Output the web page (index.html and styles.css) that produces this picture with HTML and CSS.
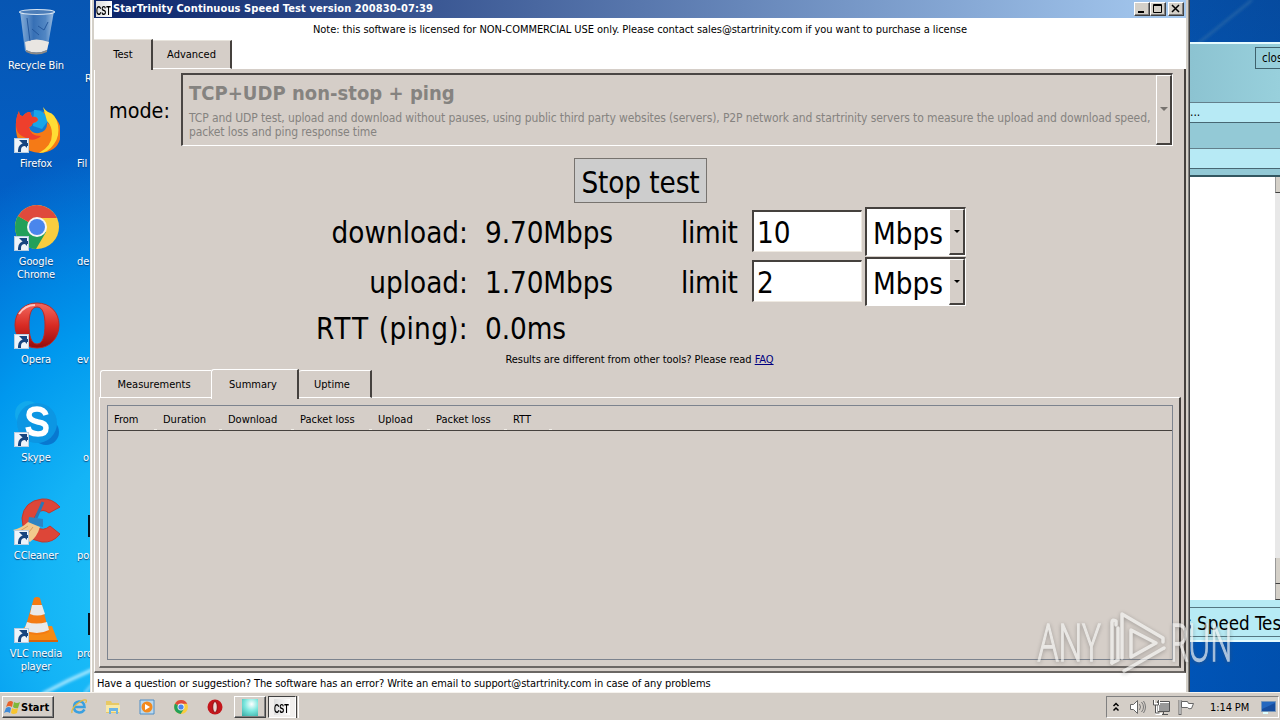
FILE: index.html
```html
<!doctype html>
<html lang="en">
<head>
    <meta charset="UTF-8">
    <title>StarTrinity Continuous Speed Test</title>
    <link rel="stylesheet" href="styles.css">
</head>
<body>
<div class="desktop">
    <svg class="wallpaper" width="1280" height="693">
        <defs>
            <filter id="soft"><feGaussianBlur stdDeviation="1.5"/></filter>
        </defs>
        <path d="M1190 50L1252 0" stroke="#2a69a8" stroke-width="2" filter="url(#soft)"/>
        <path d="M42 694Q68 680 94 669" stroke="#aeeaff" stroke-width="3" fill="none" filter="url(#soft)"/>
        <path d="M84 694L94 682" stroke="#8fdcff" stroke-width="2" fill="none" filter="url(#soft)"/>
    </svg>

    <div class="icons">
        <div class="icon">
            <svg width="48" height="50" viewBox="0 0 48 50">
                <defs><linearGradient id="bin"><stop offset="0" stop-color="#9fbfe0"/><stop offset=".4" stop-color="#3f74b5"/><stop offset=".75" stop-color="#5f8fc6"/><stop offset="1" stop-color="#b7d0ea"/></linearGradient></defs>
                <path d="M8 3L13 43Q24 48 35 43L42 3Z" fill="url(#bin)" opacity=".85"/>
                <path d="M13 34Q24 29 37 34L35 42Q24 47 14 42Z" fill="#e9e6e2"/>
                <path d="M14 42Q24 47 35 42L35 44Q24 49 14 44Z" fill="#8d8a86"/>
                <ellipse cx="25" cy="4" rx="17.500" ry="2.500" fill="#4c7db8" stroke="#d7e5f3" stroke-width="1.200"/>
                <path d="M15 10L18 33M26 18l6 4 4-8M20 21l7 6" stroke="#24579c" fill="none"/>
            </svg>
            <span>Recycle Bin</span>
        </div>
        <div class="icon">
            <svg width="48" height="50" viewBox="0 0 48 50">
                <circle cx="27" cy="21" r="17" fill="#1578d2"/>
                <path d="M22 4q11-1 14 11l-6 8-9-3z" fill="#19a5e8"/>
                <path d="M7 5q0 5 4 5 3-4 7-4l2 5q5-1 6 3-2 3-5 3-1 3-4 4 2 7 10 6 9-2 8-11 3 2 2 5 1-8-6-15 6 0 9 3 9 7 9 18-1 19-21 20Q6 45 4 25q-1-11 3-20z" fill="#f57a16"/>
                <path d="M7 5q0 5 4 5 3-4 7-4l2 5q5-1 6 3-2 3-5 3-1 3-4 4 1 9 12 9-8 7-17 1Q1 27 5 10z" fill="#ee3f2c"/>
                <path d="M31 1q2 3 5 5 8 2 10 13 2 11-4 19-6 9-15 9 13-7 13-19 0-8-5-13-2-7-4-14z" fill="#ffdc35"/>
            </svg>
            <i class="arrow"></i>
            <span>Firefox</span>
        </div>
        <div class="icon">
            <svg width="48" height="50" viewBox="0 0 48 50">
                <circle cx="25" cy="23" r="22" fill="#f9cd3f"/>
                <path d="M25 23L6 12A22 22 0 0 0 24 45L34 28Z" fill="#22a05a"/>
                <path d="M25 23L6 12A22 22 0 0 1 45 14H25Z" fill="#df4a3c"/>
                <circle cx="25" cy="23" r="10" fill="#f5f5f5"/>
                <circle cx="25" cy="23" r="8" fill="#4a86ec"/>
            </svg>
            <i class="arrow"></i>
            <span>Google<br>Chrome</span>
        </div>
        <div class="icon">
            <svg width="48" height="50" viewBox="0 0 48 50">
                <defs><linearGradient id="opera" x2="0" y2="1"><stop offset="0" stop-color="#f36a60"/><stop offset=".5" stop-color="#d82b23"/><stop offset="1" stop-color="#930c0d"/></linearGradient></defs>
                <path fill-rule="evenodd" d="M25 1C38 1 47 10 47 23S38 46 25 46 3 36 3 23 12 1 25 1ZM25 5C19 5 17 13 17 23S19 42 25 42s8-9 8-19S31 5 25 5Z" fill="url(#opera)" stroke="#b92b27"/>
                <path d="M7 12Q13 3 23 3" stroke="#ffc4bf" stroke-width="2" fill="none"/>
            </svg>
            <i class="arrow"></i>
            <span>Opera</span>
        </div>
        <div class="icon">
            <svg width="48" height="50" viewBox="0 0 48 50">
                <circle cx="16" cy="14" r="13" fill="#12a9ec"/>
                <circle cx="34" cy="32" r="13" fill="#0878d0"/>
                <circle cx="25" cy="23" r="20" fill="#0c96e3"/>
                <path d="M34 15q-2-6-9-6-8 0-8 6 0 5 9 7 8 1 8 6 0 6-8 6-9 0-10-7" fill="none" stroke="#fff" stroke-width="5.500"/>
            </svg>
            <i class="arrow"></i>
            <span>Skype</span>
        </div>
        <div class="icon">
            <svg width="48" height="50" viewBox="0 0 48 50">
                <path d="M48 9Q40 0 30 1 12 3 10 20q0 21 20 24 11 1 18-8l-10-8q-7 6-13 1-6-6 0-14 6-5 12 0Z" fill="#dd4638" stroke="#c0392e"/>
                <path d="M31 4L24 20" stroke="#2d77b5" stroke-width="3"/>
                <path d="M17 19l14 2v8l-15-3z" fill="#2e84c2"/>
                <path d="M16 24l12 5q-3 10-10 15L1 32q9-2 15-8z" fill="#f2c98d"/>
                <path d="M8 33l8-5M14 38l7-9" stroke="#d89d5e"/>
            </svg>
            <i class="arrow"></i>
            <span>CCleaner</span>
        </div>
        <div class="icon">
            <svg width="48" height="50" viewBox="0 0 48 50">
                <path d="M12 31l28-1 6 16H9z" fill="#f58a16"/>
                <path d="M9 44h37v2H9z" fill="#d8640a"/>
                <path d="M22 2q3-2 6 0l9 34q-12 6-25 0z" fill="#f47b12"/>
                <path d="M20 9h10l3 9q-8 3-15 0zM15 26q9 3 20 0l2 8q-12 6-25 0z" fill="#e9e9e9"/>
            </svg>
            <i class="arrow"></i>
            <span>VLC media<br>player</span>
        </div>
    </div>
    <div class="icons second">
        <div class="icon low"><span>R</span></div>
        <div class="icon"><span>Fil</span></div>
        <div class="icon"><span>de</span></div>
        <div class="icon"><span>ev</span></div>
        <div class="icon"><span>&nbsp; o</span></div>
        <div class="icon"><b></b><span>pos</span></div>
        <div class="icon"><b></b><span>pro</span></div>
    </div>

    <!-- window behind -->
    <div class="back-window">
        <div class="back-top"><div class="close-btn">close</div></div>
        <div class="band">...</div>
        <div class="gap"></div>
        <div class="band second-band"></div>
        <div class="strip"></div>
        <div class="page">
            <div class="scroll"><i></i><i class="thumb"></i><i class="down"></i></div>
        </div>
        <div class="back-bottom"><div>s Speed Test</div></div>
    </div>

    <!-- main window -->
    <div class="window">
        <div class="titlebar">
            <div class="cst"><span>CST</span></div>
            <div class="title">StarTrinity Continuous Speed Test version 200830-07:39</div>
            <div class="win-btn"><svg width="13" height="12"><path d="M3 8h6v2H3z"/></svg></div>
            <div class="win-btn"><svg width="13" height="12"><path d="M2.500 1.500h8v8h-8zM2 2.500h9" fill="none" stroke="#000"/></svg></div>
            <div class="win-btn last"><svg width="13" height="12"><path d="M3 2l7 7M10 2L3 9" stroke="#000" stroke-width="1.500"/></svg></div>
        </div>
        <div class="note">Note: this software is licensed for NON-COMMERCIAL USE only. Please contact sales@startrinity.com if you want to purchase a license</div>
        <div class="tabs">
            <div class="tab active">Test</div>
            <div class="tab">Advanced</div>
        </div>
        <div class="panel">
            <div class="mode">
                <label>mode:</label>
                <div class="mode-box">
                    <div class="mode-text">
                        <h2>TCP+UDP non-stop + ping</h2>
                        <p>TCP and UDP test, upload and download without pauses, using public third party websites (servers), P2P network and startrinity servers to measure the upload and download speed,</p>
                        <p>packet loss and ping response time</p>
                    </div>
                    <div class="drop"><i></i></div>
                </div>
            </div>
            <div class="stop">Stop test</div>
            <div class="row">
                <div class="name">download:</div>
                <div class="value">9.70Mbps</div>
                <div class="limit">limit</div>
                <div class="input">10</div>
                <div class="select"><span>Mbps</span><div class="drop"><i></i></div></div>
            </div>
            <div class="row">
                <div class="name">upload:</div>
                <div class="value">1.70Mbps</div>
                <div class="limit">limit</div>
                <div class="input">2</div>
                <div class="select"><span>Mbps</span><div class="drop"><i></i></div></div>
            </div>
            <div class="row rtt">
                <div class="name"><span>RTT</span> (ping):</div>
                <div class="value">0.0ms</div>
            </div>
            <div class="faq">Results are different from other tools? Please read <a>FAQ</a></div>
            <div class="tabs inner">
                <div class="tab t1">Measurements</div>
                <div class="tab t2 active">Summary</div>
                <div class="tab t3">Uptime</div>
            </div>
            <div class="subpanel">
                <div class="list">
                    <div class="list-head">
                        <span class="c1">From</span>
                        <span class="c2">Duration</span>
                        <span class="c3">Download</span>
                        <span class="c4">Packet loss</span>
                        <span class="c5">Upload</span>
                        <span class="c6">Packet loss</span>
                        <span class="c7">RTT</span>
                    </div>
                </div>
            </div>
        </div>
        <div class="footer">Have a question or suggestion? The software has an error? Write an email to support@startrinity.com in case of any problems</div>
    </div>

    <div class="watermark">
        <span class="any">ANY</span>
        <svg width="60" height="66" viewBox="0 0 60 66">
            <g fill="none" stroke="#f4f4f2" stroke-width="3.500" stroke-linejoin="round" stroke-linecap="round">
                <path d="M2 55V14q0-3 4-1v4"/>
                <path d="M12 50V6L53 30v4"/>
                <path d="M2 55l6-3V20"/>
                <path d="M21 22L46 35 21 49Z"/>
                <path d="M14 63L54 40"/>
            </g>
        </svg>
        <span class="run">RUN</span>
    </div>

    <div class="taskbar">
        <div class="start">
            <svg width="17" height="16" viewBox="0 0 17 16">
                <path d="M4 3q3-2 5 0L8 8Q5 6 2 8z" fill="#e8622a"/>
                <path d="M10 3q3 2 6 0l-2 6q-3 1-5-1z" fill="#7fb83b"/>
                <path d="M2 9q3-2 5 0l-1 5Q3 12 0 14z" fill="#3f8bd8"/>
                <path d="M8 9q3 2 6 0l-1 5q-4 2-6 0z" fill="#f7c52f"/>
            </svg>
            Start
        </div>
        <div class="quick">
            <svg viewBox="0 0 16 16">
                <path d="M13.500 10.500Q11 14 8 13.500 3 13 3 8t5-5.500 5.500 5.500H4" fill="none" stroke="#3aa0e0" stroke-width="2.500"/>
                <path d="M1 14Q0 10 6 5t9-4q1 1-.5 3" fill="none" stroke="#e5b93c" stroke-width="1.200"/>
            </svg>
            <svg viewBox="0 0 16 16">
                <path d="M1 2h5l1 2h7v10H1z" fill="#e8c964"/>
                <path d="M1 6h14v7H1z" fill="#f8e9a6"/>
                <path d="M4 15V9h9v6h-2v-3H6v3z" fill="#6db4e4"/>
            </svg>
            <svg viewBox="0 0 16 16">
                <path d="M1 1h14v14H1z" fill="#b9d8ee" stroke="#4f8ec6"/>
                <circle cx="8" cy="8" r="5.500" fill="#f28a1e"/>
                <path d="M6 5l5 3-5 3z" fill="#fff"/>
            </svg>
            <svg viewBox="2 0 46 46">
                <circle cx="25" cy="23" r="20" fill="#f9cd3f"/>
                <path d="M25 23L8 13A20 20 0 0 0 24 43L34 28Z" fill="#22a05a"/>
                <path d="M25 23L8 13A20 20 0 0 1 43 14H25Z" fill="#df4a3c"/>
                <circle cx="25" cy="23" r="10" fill="#f5f5f5"/>
                <circle cx="25" cy="23" r="7.500" fill="#4a86ec"/>
            </svg>
            <svg viewBox="0 0 16 16">
                <circle cx="8" cy="8" r="7.500" fill="#c4161c"/>
                <ellipse cx="8" cy="8" rx="2.300" ry="5.500" fill="#e9d9d5" stroke="#8e0d10"/>
            </svg>
        </div>
        <div class="task"><i></i></div>
        <div class="task pressed"><div class="cst"><span>CST</span></div></div>
        <div class="task-grip"></div>
        <div class="tray">
            <svg class="chev" width="8" height="12"><path d="M1.500 5L4 2.500 6.500 5M1.500 9.500L4 7l2.500 2.500" fill="none" stroke="#000" stroke-width="1.500"/></svg>
            <svg class="snd" width="18" height="16"><path d="M1.500 5.500h3l4-4v13l-4-4h-3z" fill="#fff" stroke="#666"/><path d="M10.500 5q2 3 0 6M12.500 3q4 5 0 10M14.500 2q4 6 0 12" fill="none" stroke="#777"/></svg>
            <svg class="net" width="18" height="17"><path d="M5.500 3.500h11v9h-11z" fill="#999" stroke="#fff"/><path d="M4.500 2.500h12v10h-12zM8 15.500h7M10.500 13v2" fill="none" stroke="#555"/><path d="M1 1v4h5V1M3.500 5v10H9" fill="none" stroke="#fff" stroke-width="2"/><path d="M.5 1v5h5V1M2.500 6v8h4" fill="none" stroke="#555"/></svg>
            <svg class="flag" width="17" height="16"><path d="M2 1v15" stroke="#666" stroke-width="3"/><path d="M2 1v14" stroke="#fff"/><path d="M3.500 2.500h6l1 2h5l-2 5q-3 1-4-1h-6z" fill="#fff" stroke="#666"/></svg>
            <span>1:14 PM</span>
            <svg class="show" width="15" height="13"><path d="M.5.500h14v10H.5z" fill="#2467bf" stroke="#7796b8"/><path d="M1 8L14 2v8H1z" fill="#164d9f"/><path d="M2 12h5" stroke="#dff" stroke-width="2"/></svg>
        </div>
    </div>
</div>
</body>
</html>
```
FILE: styles.css
```css
*{padding: 0;margin: 0;box-sizing: border-box}
body{
    width: 1280px;
    height: 720px;
    overflow: hidden;
    font: 11px/13px "DejaVu Sans Condensed", "DejaVu Sans", sans-serif;
    font-stretch: condensed;
    color: #000;
    white-space: nowrap;
}
i{font-style: normal}
svg{display: block;flex: none}
.desktop{
    position: relative;
    width: 1280px;
    height: 720px;
    overflow: hidden;
    display: flex;
    background: radial-gradient(ellipse 380px 460px at 170px 600px, #24c8fa 0%, #14b4f6 35%, #0098ee 62%, rgba(0,110,215,0) 100%),
        linear-gradient(90deg, rgba(0,0,0,0) 80%, rgba(0,30,80,.2)), linear-gradient(#0756b3, #0064cf 40%, #005bc4);
}
.wallpaper{position: absolute;left: 0;top: 0}

/* desktop icons */
.icons{
    position: relative;
    width: 72px;
    padding-top: 8px;
    color: #fff;
    text-align: center;
    text-shadow: 0 1px 1px #123c70;
    letter-spacing: -.1px;
}
.icon{
    position: relative;
    height: 98px;
    display: flex;
    flex-direction: column;
    align-items: center;
}
.icon svg{margin-bottom: 1px}
.icon .arrow{
    position: absolute;
    left: 14px;
    top: 32px;
    width: 15px;
    height: 15px;
    background: #eef4fa;
    border: 1px solid #b9cde0;
    overflow: hidden;
}
.icon .arrow:before{
    content: "";
    position: absolute;
    left: 3px;
    top: 4px;
    width: 7px;
    height: 9px;
    border: 3px solid #17457f;
    border-right: 0;
    border-bottom: 0;
    border-radius: 7px 0 0 0;
}
.icon .arrow:after{
    content: "";
    position: absolute;
    right: 1px;
    top: 1px;
    border: 4px solid #17457f;
    border-left-color: transparent;
    border-bottom-color: transparent;
}
.second{width: 40px;text-align: left}
.second .icon{align-items: flex-start;padding: 51px 0 0 5px}
.second .low{padding: 64px 0 0 13px}
.second b{
    position: absolute;
    left: 16px;
    top: 17px;
    width: 4px;
    height: 22px;
    background: #071421;
}

/* window behind */
.back-window{
    position: absolute;
    left: 1190px;
    top: 42px;
    width: 90px;
    height: 600px;
    display: flex;
    flex-direction: column;
    overflow: hidden;
    background: #93c9d6;
    border-top: 2px solid #e5fbff;
}
.back-top{height: 58px;padding: 3px 0 0 65px;background: linear-gradient(90deg, #8cc3d1, #98d0dc)}
.close-btn{
    width: 40px;
    height: 22px;
    border: 1px solid #3f626d;
    padding: 4px 0 0 6px;
    font-size: 11.500px;
}
.band{
    height: 21px;
    background: #b7eaf5;
    border-top: 1px solid #63808c;
    border-bottom: 1px solid #476773;
    font-size: 12px;
    line-height: 18px;
}
.gap{height: 25px}
.strip{height: 8px;border-bottom: 2px solid #345761}
.page{
    height: 423px;
    background: #fff;
    display: flex;
    justify-content: flex-end;
}
.scroll{
    width: 5px;
    background: #e8e8e8;
    display: flex;
    flex-direction: column;
}
.scroll i{
    height: 16px;
    background: #d4d0c8;
    border-left: 1px solid #999;
    border-bottom: 1px solid #404040;
}
.scroll .thumb{height: 26px;margin-top: auto}
.back-bottom{
    height: 42px;
    padding-top: 7px;
    background: #b7ebf5;
    border-bottom: 2px solid #e5fbff;
}
.back-bottom div{
    height: 30px;
    border-top: 1px solid #547782;
    border-bottom: 1px solid #547782;
    font-size: 18.670px;
    line-height: 31px;
    text-indent: -7px;
}

/* main window */
.window{
    position: absolute;
    left: 90px;
    top: 0;
    width: 1100px;
    height: 693px;
    background: #fff;
    border-left: 1px solid #e8e5df;
    border-right: 1px solid #404040;
    box-shadow: inset 1px 0 #fff, inset 3px 0 #d4d0c8, inset -1px 0 #808080, inset -3px 0 #d4d0c8;
    padding: 0 3px;
    display: flex;
    flex-direction: column;
}
.titlebar{
    height: 18px;
    display: flex;
    padding: 1px 2px 0;
    background: linear-gradient(90deg, #0a246a, #a6caf0);
    color: #fff;
}
.cst{
    width: 16px;
    height: 16px;
    background: linear-gradient(90deg, #ddd, #fff);
    color: #000;
    overflow: hidden;
}
.cst span{
    display: block;
    width: 27px;
    font: bold 12px/20px "Liberation Sans", sans-serif;
    transform: scaleX(.62);
    transform-origin: left;
}
.title{
    flex: 1;
    padding: 1px 0 0 1px;
    font-weight: bold;
    letter-spacing: .1px;
}
.win-btn{
    width: 16px;
    height: 14px;
    margin-top: 1px;
    background: #d4d0c8;
    border: 1px solid #fff;
    border-right-color: #404040;
    border-bottom-color: #404040;
    box-shadow: inset -1px -1px #808080;
}
.win-btn.last{margin-left: 2px}
.note{
    height: 21px;
    padding-top: 5px;
    text-align: center;
    letter-spacing: -.056px;
}
.tabs{
    position: relative;
    height: 30px;
    display: flex;
    align-items: flex-end;
}
.tab{
    width: 79px;
    height: 29px;
    line-height: 27px;
    text-align: center;
    background: #d5cec8;
    border-top: 1px solid #e8e4dd;
    border-right: 2px solid #45413e;
    border-bottom: 1px solid #fff;
}
.tab.active{
    width: 59px;
    height: 31px;
    line-height: 30px;
    border-bottom: 0;
    margin-bottom: -1px;
    padding-left: 1px;
}
.panel{
    width: 1092px;
    height: 604px;
    padding: 4px 0 0 4px;
    background: #d5cec8;
    border-left: 1px solid #fff;
    border-right: 2px solid #45413e;
    border-bottom: 2px solid #6b6764;
    display: flex;
    flex-direction: column;
}
.mode{
    height: 72px;
    display: flex;
    align-items: center;
}
.mode label{
    width: 82px;
    flex: none;
    padding: 3px 0 0 10px;
    font-size: 21.330px;
    line-height: 28px;
}
.mode-box{
    width: 992px;
    height: 73px;
    flex: none;
    display: flex;
    justify-content: space-between;
    color: #858380;
    border: 2px solid #4a4644;
    border-right: 1px solid #fff;
    border-bottom: 1px solid #fff;
}
.mode-text{
    width: 960px;
    padding: 6px 0 0 6px;
    font-size: 12px;
    line-height: 14px;
    letter-spacing: -.107px;
}
.mode-text h2{font-size: 20px;line-height: 25px;margin-bottom: 5px;letter-spacing: .03px}
.drop{
    width: 16px;
    flex: none;
    display: flex;
    align-items: center;
    justify-content: center;
    background: #d5cec8;
    border: 1px solid #fff;
    border-right: 2px solid #45413e;
    border-bottom: 2px solid #45413e;
}
.drop i{
    border: 3px solid transparent;
    border-top: 3px solid #000;
    border-bottom: 0;
}
.mode-box .drop i{border-top-color: #77736f;border-width: 4px 4px 0}
.stop{
    width: 133px;
    height: 45px;
    margin: 13px 0 4px 475px;
    border: 1px solid #77736f;
    background: #cdcdcd;
    font-size: 29.330px;
    line-height: 48px;
    text-align: center;
    letter-spacing: -.1px;
}
.row{
    height: 50px;
    display: flex;
    align-items: center;
    font-size: 29.330px;
    line-height: 36px;
}
.name,.value,.limit{padding-top: 2px}
.name{width: 369px;text-align: right}
.value{width: 196px;padding-left: 17px;letter-spacing: -.1px}
.limit{width: 88px;padding-left: 17px;letter-spacing: -.3px}
.input{
    width: 110px;
    height: 42px;
    margin-top: -2px;
    background: #fff;
    border: 2px solid #45413e;
    border-right: 1px solid #efeae2;
    border-bottom: 1px solid #efeae2;
    padding-left: 3px;
    line-height: 42px;
}
.select{
    width: 101px;
    height: 49px;
    margin: -2px 0 0 3px;
    display: flex;
    justify-content: space-between;
    background: #fff;
    border: 2px solid #45413e;
    border-right: 1px solid #fff;
    border-bottom: 1px solid #fff;
}
.select span{padding-left: 6px;line-height: 50px}
.rtt{height: 42px}
.rtt .name,.rtt .value{padding-top: 1px}
.rtt .name{letter-spacing: .3px}
.rtt .name span{letter-spacing: 2.100px}
.faq{
    height: 20px;
    padding-top: 4px;
    padding-right: 4px;
    text-align: center;
    letter-spacing: -.05px;
}
.faq a{color: #000080;text-decoration: underline}
.inner{padding-left: 1px;height: 29px;margin-top: -2px;top: 2px}
.inner .tab{
    height: 28px;
    border-top-color: #fff;
    border-left: 1px solid #fff;
    border-radius: 3px 0 0 0;
}
.inner .t1{width: 111px;border-right: 0;padding-right: 4px}
.inner .t2{width: 88px;height: 30px;padding-right: 4px}
.inner .t3{width: 73px;padding-right: 5px;border-left: 0}
.subpanel{
    width: 1082px;
    height: 271px;
    margin-top: 1px;
    padding: 7px;
    border: 1px solid #fff;
    border-right: 2px solid #45413e;
    border-bottom: 2px solid #6b6764;
}
.list{
    width: 1066px;
    height: 255px;
    border: 1px solid #7c838e;
}
.list-head{
    height: 25px;
    display: flex;
    line-height: 27px;
    padding-left: 6px;
    border-bottom: 1px solid #45413e;
}
.list-head span{
    flex: none;
    background: linear-gradient(#f2efe9, #f2efe9) no-repeat right 6px bottom / 3px 1px;
}
.c1{width: 49px}
.c2{width: 65px}
.c3{width: 72px}
.c4{width: 78px}
.c5{width: 58px}
.c6{width: 77px}
.c7{width: 45px}
.footer{padding: 4px 0 0 3px;letter-spacing: -.084px}

.watermark{
    position: absolute;
    left: 1038px;
    top: 606px;
    display: flex;
    align-items: center;
    color: #f2f2f0;
    opacity: .7;
    filter: drop-shadow(0 1px 2px rgba(80,80,80,.6));
}
.watermark span{
    display: block;
    font: 300 51px/70px "Open Sans", sans-serif;
    -webkit-text-stroke: 1.500px #f2f2f0;
    transform: scaleX(.66);
    transform-origin: left;
    width: 72px;
}
.watermark .run{width: 60px;transform: scaleX(.6)}

/* taskbar */
.taskbar{
    position: absolute;
    left: 0;
    bottom: 0;
    width: 1280px;
    height: 28px;
    padding: 3px 0 2px 2px;
    display: flex;
    background: #d4cec7;
    border-top: 1px solid #f6f3ee;
}
.start,.task{
    border: 1px solid #fff;
    border-right-color: #404040;
    border-bottom-color: #404040;
    box-shadow: inset -1px -1px #808080;
    display: flex;
    align-items: center;
}
.start{
    width: 52px;
    height: 22px;
    padding-left: 1px;
    font-weight: bold;
}
.quick{display: flex;gap: 18px;padding: 3px 11px 0 17px}
.quick svg{width: 16px;height: 16px}
.task{width: 32px;height: 22px;justify-content: center}
.task i{width: 16px;height: 17px;background: radial-gradient(circle at 60% 30%, #fff, #7de8df 45%, #35a9a2)}
.pressed{
    width: 28px;
    margin-left: 2px;
    background: #f1efed;
    border-color: #404040 #fff #fff #404040;
    box-shadow: none;
}
.task-grip{width: 3px;border-left: 1px solid #404040;border-right: 1px solid #fff}
.tray{
    width: 173px;
    height: 22px;
    margin-left: auto;
    margin-right: 1px;
    display: flex;
    align-items: center;
    border: 1px solid #808080;
    border-right-color: #fff;
    border-bottom-color: #fff;
}
.chev{margin-left: 5px}
.snd{margin-left: 9px}
.net{margin-left: 6px}
.flag{margin-left: 7px}
.tray span{margin-left: 15px;width: 51px;letter-spacing: -.1px}
```
